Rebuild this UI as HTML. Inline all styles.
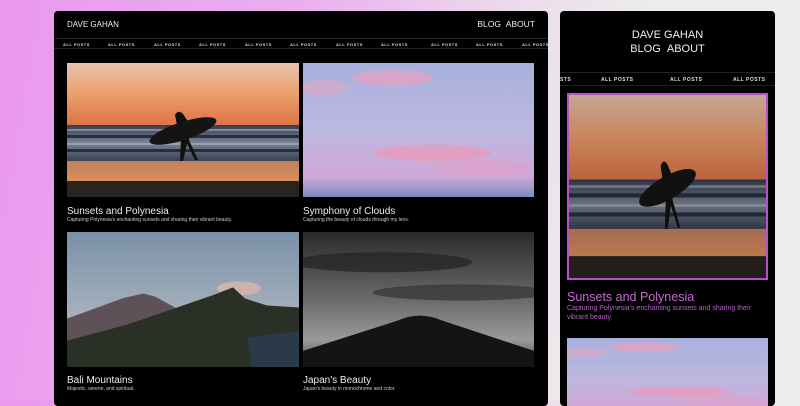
<!DOCTYPE html>
<html><head><meta charset="utf-8"><style>
*{margin:0;padding:0;box-sizing:border-box}
body{width:800px;height:400px;overflow:hidden;font-family:"Liberation Sans",sans-serif;background:linear-gradient(100deg,#ea98f0 0%,#eab0ee 35%,#ecdcec 60%,#ececec 75%,#ececec 100%);position:relative}
.p{position:absolute;background:#000;border-radius:4px;overflow:hidden;color:#eee}
.tick{position:absolute;left:0;right:0;border-top:1px solid #222;border-bottom:1px solid #222;font-weight:bold;letter-spacing:.5px;white-space:nowrap;color:#ddd}
.tick span{position:absolute}
.img{position:absolute}
.img svg{width:100%;height:100%;display:block}
.t{position:absolute;font-size:10px;color:#eee}
.s{position:absolute;font-size:5px;color:#ccc}
</style></head><body>
<svg width="0" height="0" style="position:absolute"><defs>
<linearGradient id="sky1" x1="0" y1="0" x2="0" y2="1"><stop offset="0" stop-color="#e6c4ae"/><stop offset=".5" stop-color="#ec9e6c"/><stop offset="1" stop-color="#de7448"/></linearGradient>
<linearGradient id="sea1" x1="0" y1="0" x2="0" y2="1"><stop offset="0" stop-color="#343c50"/><stop offset=".5" stop-color="#7a8496"/><stop offset="1" stop-color="#3a4050"/></linearGradient>
<linearGradient id="sand1" x1="0" y1="0" x2="0" y2="1"><stop offset="0" stop-color="#c08060"/><stop offset="1" stop-color="#e0905a"/></linearGradient>
<linearGradient id="cl" x1="0" y1="0" x2="0" y2="1"><stop offset="0" stop-color="#a8b0dc"/><stop offset=".5" stop-color="#bcb8e0"/><stop offset=".85" stop-color="#d0a8d8"/><stop offset="1" stop-color="#7a8cc0"/></linearGradient>
<linearGradient id="bs" x1="0" y1="0" x2="0" y2="1"><stop offset="0" stop-color="#7a90a8"/><stop offset=".6" stop-color="#a4b0bc"/><stop offset="1" stop-color="#c8a890"/></linearGradient>
<linearGradient id="js" x1="0" y1="0" x2="0" y2="1"><stop offset="0" stop-color="#2a2a2a"/><stop offset=".5" stop-color="#6a6a6a"/><stop offset=".8" stop-color="#9a9a9a"/><stop offset="1" stop-color="#444"/></linearGradient>
<symbol id="sun" viewBox="0 0 232 134" preserveAspectRatio="none">
<rect width="232" height="62" fill="url(#sky1)"/><rect y="62" width="232" height="36" fill="url(#sea1)"/>
<rect y="66" width="232" height="2" fill="#aab0bc" opacity=".6"/><rect y="72" width="232" height="3" fill="#262e40"/><rect y="80" width="232" height="2" fill="#b0b6c0" opacity=".6"/><rect y="86" width="232" height="3" fill="#262e40"/>
<rect y="98" width="232" height="22" fill="url(#sand1)"/><rect y="118" width="232" height="16" fill="#2a2420"/>
<path d="M108 52 q3-6 8-1 l4 6 l2 20 l9 20 h-3 l-8-16 l-4 17 h-3 l1-22 l-4-14z" fill="#111"/>
<ellipse cx="116" cy="68" rx="35" ry="9" transform="rotate(-18 116 68)" fill="#141414"/>
</symbol>
<symbol id="cld" viewBox="0 0 232 134" preserveAspectRatio="none">
<rect width="232" height="134" fill="url(#cl)"/>
<ellipse cx="90" cy="15" rx="40" ry="8" fill="#eaa0c0" opacity=".7"/>
<ellipse cx="20" cy="25" rx="25" ry="8" fill="#e2a6c4" opacity=".6"/>
<ellipse cx="130" cy="90" rx="60" ry="8" fill="#eb98b8" opacity=".7"/>
<ellipse cx="180" cy="105" rx="50" ry="8" fill="#e0a0c8" opacity=".6"/>
</symbol>
<symbol id="bal" viewBox="0 0 232 134" preserveAspectRatio="none">
<rect width="232" height="134" fill="url(#bs)"/>
<path d="M0 86 L55 66 L76 61 L88 64 L110 76 L0 115z" fill="#5e5258"/>
<ellipse cx="172" cy="56" rx="22" ry="7" fill="#d8b4ac" opacity=".85"/>
<path d="M0 134 L0 108 L60 92 L110 75 L145 63 L166 55 L178 66 L200 73 L232 75 L232 134z" fill="#2a3026"/>
<path d="M180 105 L232 98 L232 134 L185 134z" fill="#2a3a4a"/>
</symbol>
<symbol id="jap" viewBox="0 0 232 134" preserveAspectRatio="none">
<rect width="232" height="134" fill="url(#js)"/>
<ellipse cx="80" cy="30" rx="90" ry="10" fill="#222" opacity=".7"/>
<ellipse cx="160" cy="60" rx="90" ry="8" fill="#333" opacity=".7"/>
<path d="M0 134 L0 118 L95 88 Q117 78 140 88 L232 118 L232 134z" fill="#141414"/>
</symbol>
</defs></svg>

<div class="p" style="left:54px;top:11px;width:494px;height:395px">
<div style="position:absolute;left:13px;top:9px;font-size:8px">DAVE GAHAN</div>
<div style="position:absolute;right:13px;top:8px;font-size:8.5px">BLOG&nbsp;&nbsp;ABOUT</div>
<div class="tick" style="top:27px;height:11px;font-size:4px">
<span style="left:9px;top:3px">ALL POSTS</span><span style="left:54px;top:3px">ALL POSTS</span><span style="left:100px;top:3px">ALL POSTS</span><span style="left:145px;top:3px">ALL POSTS</span><span style="left:191px;top:3px">ALL POSTS</span><span style="left:236px;top:3px">ALL POSTS</span><span style="left:282px;top:3px">ALL POSTS</span><span style="left:327px;top:3px">ALL POSTS</span><span style="left:377px;top:3px">ALL POSTS</span><span style="left:422px;top:3px">ALL POSTS</span><span style="left:468px;top:3px">ALL POSTS</span></div>
<div class="img" style="left:13px;top:52px;width:232px;height:134px"><svg><use href="#sun"/></svg></div>
<div class="img" style="left:249px;top:52px;width:231px;height:134px"><svg><use href="#cld"/></svg></div>
<div class="t" style="left:13px;top:195px">Sunsets and Polynesia</div>
<div class="s" style="left:13px;top:206px">Capturing Polynesia's enchanting sunsets and sharing their vibrant beauty.</div>
<div class="t" style="left:249px;top:195px">Symphony of Clouds</div>
<div class="s" style="left:249px;top:206px">Capturing the beauty of clouds through my lens.</div>
<div class="img" style="left:13px;top:221px;width:232px;height:135px"><svg><use href="#bal"/></svg></div>
<div class="img" style="left:249px;top:221px;width:231px;height:135px"><svg><use href="#jap"/></svg></div>
<div class="t" style="left:13px;top:364px">Bali Mountains</div>
<div class="s" style="left:13px;top:375px">Majestic, serene, and spiritual.</div>
<div class="t" style="left:249px;top:364px">Japan's Beauty</div>
<div class="s" style="left:249px;top:375px">Japan's beauty in monochrome and color.</div>
</div>

<div class="p" style="left:560px;top:11px;width:215px;height:395px">
<div style="position:absolute;left:0;right:0;top:17px;text-align:center;font-size:11px;line-height:14px">DAVE GAHAN<br>BLOG&nbsp;&nbsp;ABOUT</div>
<div class="tick" style="top:61px;height:14px;font-size:5px">
<span style="left:0;top:4px">STS</span><span style="left:41px;top:4px">ALL POSTS</span><span style="left:110px;top:4px">ALL POSTS</span><span style="left:173px;top:4px">ALL POSTS</span></div>
<div class="img" style="left:7px;top:82px;width:201px;height:187px;border:2px solid #b850c8"><svg style="opacity:.85"><use href="#sun"/></svg></div>
<div style="position:absolute;left:7px;top:279px;font-size:12.5px;color:#cc66d8">Sunsets and Polynesia</div>
<div style="position:absolute;left:7px;top:294px;width:205px;font-size:7px;line-height:8.5px;color:#b860c8">Capturing Polynesia's enchanting sunsets and sharing their vibrant beauty.</div>
<div class="img" style="left:7px;top:327px;width:201px;height:80px"><svg><use href="#cld"/></svg></div>
</div>
</body></html>
